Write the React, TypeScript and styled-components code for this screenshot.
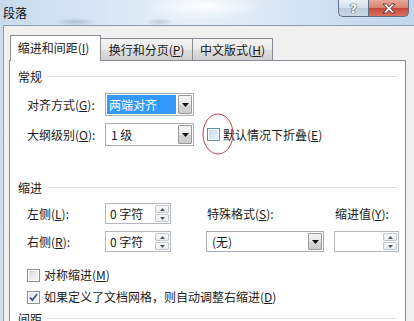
import React from 'react';
import styled, { createGlobalStyle, css } from 'styled-components';

const GlobalStyle = createGlobalStyle`
  html, body {
    margin: 0;
    padding: 0;
  }
  body {
    background: #fff;
    font-family: "Noto Sans CJK SC", "Noto Sans", sans-serif;
    font-size: 12px;
    color: #1a1a1a;
  }
  u {
    text-decoration-thickness: 1px;
    text-underline-offset: 1px;
  }
`;

type CheckState = 'normal' | 'hover' | 'checked';

function CheckBox({ state }: { state: CheckState }) {
  return (
    <Box $state={state}>
      {state === 'checked' && (
        <svg width="9" height="9" viewBox="0 0 9 9">
          <path d="M1 4.6 L3.4 7.2 L8 1.2" fill="none" stroke="#3f528a" strokeWidth="1.8" />
        </svg>
      )}
    </Box>
  );
}

function ComboBox({ value, width, selected }: { value: string; width: number; selected?: boolean }) {
  return (
    <Combo $width={width}>
      <ComboValue $selected={selected}>{value}</ComboValue>
      <DropButton>
        <svg width="7" height="4" viewBox="0 0 7 4">
          <path d="M0 0 H7 L3.5 4 Z" fill="#111" />
        </svg>
      </DropButton>
    </Combo>
  );
}

function SpinBox({ value, width }: { value: string; width: number }) {
  return (
    <Spin $width={width}>
      <SpinValue>{value}</SpinValue>
      <SpinButtons>
        <SpinHalf>
          <svg width="5" height="3" viewBox="0 0 5 3">
            <path d="M0 3 H5 L2.5 0 Z" fill="#555" />
          </svg>
        </SpinHalf>
        <SpinHalf>
          <svg width="5" height="3" viewBox="0 0 5 3">
            <path d="M0 0 H5 L2.5 3 Z" fill="#555" />
          </svg>
        </SpinHalf>
      </SpinButtons>
    </Spin>
  );
}

export default function App() {
  return (
    <>
      <GlobalStyle />
      <Window>
        <TitleBar>
          <Title>段落</Title>
          <CaptionButtons>
            <HelpButton>?</HelpButton>
            <CloseButton>
              <svg width="14" height="11" viewBox="0 0 14 11">
                <path
                  d="M1 1 H4.5 L7 3.8 L9.5 1 H13 L8.8 5.5 L13 10 H9.5 L7 7.2 L4.5 10 H1 L5.2 5.5 Z"
                  fill="#fff"
                  stroke="#5a2a24"
                  strokeWidth="0.9"
                  strokeLinejoin="round"
                />
              </svg>
            </CloseButton>
          </CaptionButtons>
        </TitleBar>

        <Frame>
          <Body>
            <TabStrip>
              <Tab $active $width={91}>
                缩进和间距(<u>I</u>)
              </Tab>
              <Tab $width={93}>
                换行和分页(<u>P</u>)
              </Tab>
              <Tab $width={81}>
                中文版式(<u>H</u>)
              </Tab>
            </TabStrip>

            <Panel>
              <SectionHeader>常规</SectionHeader>
              <GeneralRows>
                <FieldRow>
                  <FieldLabel>
                    对齐方式(<u>G</u>):
                  </FieldLabel>
                  <ComboBox value="两端对齐" width={89} selected />
                </FieldRow>
                <FieldRow>
                  <FieldLabel>
                    大纲级别(<u>O</u>):
                  </FieldLabel>
                  <ComboBox value="1 级" width={89} />
                  <CollapseOption>
                    <CheckBox state="hover" />
                    <span>
                      默认情况下折叠(<u>E</u>)
                    </span>
                    {/* red marker drawn on top of the screenshot */}
                    <Marker width="34" height="44" viewBox="0 0 34 44">
                      <ellipse cx="17" cy="22" rx="15" ry="20" fill="none" stroke="#c8404a" strokeWidth="1" />
                    </Marker>
                  </CollapseOption>
                </FieldRow>
              </GeneralRows>

              <SectionHeader $gap={34}>缩进</SectionHeader>
              <IndentGrid>
                <FieldLabel>
                  左侧(<u>L</u>):
                </FieldLabel>
                <SpinBox value="0 字符" width={66} />
                <GridLabel>
                  特殊格式(<u>S</u>):
                </GridLabel>
                <GridLabel>
                  缩进值(<u>Y</u>):
                </GridLabel>

                <FieldLabel>
                  右侧(<u>R</u>):
                </FieldLabel>
                <SpinBox value="0 字符" width={66} />
                <ComboBox value="(无)" width={118} />
                <SpinBox value="" width={65} />
              </IndentGrid>

              <OptionList>
                <OptionRow>
                  <CheckBox state="normal" />
                  <span>
                    对称缩进(<u>M</u>)
                  </span>
                </OptionRow>
                <OptionRow>
                  <CheckBox state="checked" />
                  <span>
                    如果定义了文档网格，则自动调整右缩进(<u>D</u>)
                  </span>
                </OptionRow>
              </OptionList>

              <SectionHeader $gap={6}>间距</SectionHeader>
            </Panel>
          </Body>
        </Frame>
      </Window>
    </>
  );
}

const Window = styled.div`
  width: 414px;
  height: 321px;
  overflow: hidden;
  display: flex;
  flex-direction: column;
  background: #cfdcea;
`;

const TitleBar = styled.div`
  height: 25px;
  flex: none;
  display: flex;
  justify-content: space-between;
  align-items: flex-start;
  padding: 0 5px 0 3px;
  background:
    radial-gradient(ellipse 60px 14px at 205px 6px, rgba(255, 255, 255, 0.9), rgba(255, 255, 255, 0)),
    radial-gradient(ellipse 22px 4px at 75px 22px, rgba(110, 130, 160, 0.35), rgba(110, 130, 160, 0)),
    radial-gradient(ellipse 14px 4px at 160px 22px, rgba(110, 130, 160, 0.3), rgba(110, 130, 160, 0)),
    linear-gradient(90deg, #c8dbee 0%, #d6e4f3 22%, #e7f0f9 45%, #dce8f5 65%, #c9dcef 85%, #c2d6ec 100%);
`;

const Title = styled.div`
  margin-top: 5px;
  line-height: 16px;
  font-size: 12px;
  color: #111;
`;

const CaptionButtons = styled.div`
  display: flex;
`;

const captionButton = css`
  height: 17px;
  box-sizing: border-box;
  display: flex;
  align-items: center;
  justify-content: center;
  border: 1px solid #5e6f86;
  border-top: none;
`;

const HelpButton = styled.div`
  ${captionButton};
  width: 30px;
  border-right: none;
  border-bottom-left-radius: 5px;
  background: linear-gradient(180deg, #e9eff6 0%, #d5e0ec 50%, #bccbdc 51%, #c9d6e5 100%);
  font-family: "DejaVu Sans", sans-serif;
  font-weight: bold;
  font-size: 13px;
  color: #fff;
  text-shadow: 0 0 1px #3b4a5e, 0 0 1px #3b4a5e, 0 0 1px #3b4a5e;
`;

const CloseButton = styled.div`
  ${captionButton};
  width: 41px;
  border-bottom-right-radius: 5px;
  background: linear-gradient(180deg, #e8a79b 0%, #d9806f 50%, #c7463a 51%, #d7705e 100%);
`;

const Frame = styled.div`
  flex: 1;
  display: flex;
  padding-left: 3px;
  background: linear-gradient(180deg, #cddbea 0%, #d7e1ec 100%);
`;

const Body = styled.div`
  flex: 1;
  background: #f0f0f0;
  border-top: 1px solid #8d9cae;
  border-left: 1px solid #8d9cae;
  padding: 9px 0 0 5px;
`;

const TabStrip = styled.div`
  height: 25px;
  display: flex;
  align-items: flex-end;
  padding-left: 1px;
`;

const Tab = styled.div<{ $active?: boolean; $width: number }>`
  width: ${(p) => p.$width}px;
  box-sizing: border-box;
  display: flex;
  align-items: center;
  justify-content: center;
  position: relative;
  line-height: 16px;
  border: 1px solid #898c95;
  border-bottom: none;
  margin-left: -1px;
  color: #1a1a1a;

  ${(p) =>
    p.$active
      ? css`
          height: 26px;
          margin-bottom: -1px;
          padding: 0 4px 2px 0;
          background: #fff;
          z-index: 2;
          &:first-child {
            margin-left: 0;
          }
        `
      : css`
          height: 22px;
          padding-top: 1px;
          background: linear-gradient(180deg, #f3f3f3 0%, #ebebeb 45%, #dddddd 55%, #cfcfcf 100%);
          z-index: 1;
        `}
`;

const Panel = styled.div`
  position: relative;
  z-index: 1;
  width: 397px;
  height: 400px;
  box-sizing: border-box;
  background: #fff;
  border: 1px solid #898c95;
  padding: 8px 8px 0 8px;
`;

const SectionHeader = styled.div<{ $gap?: number }>`
  display: flex;
  align-items: center;
  height: 16px;
  line-height: 16px;
  margin-top: ${(p) => p.$gap ?? 0}px;
  color: #1a1a1a;

  &::after {
    content: '';
    flex: 1;
    height: 1px;
    margin-left: 5px;
    margin-top: -1px;
    background: #dcdfe3;
  }
`;

const GeneralRows = styled.div`
  display: flex;
  flex-direction: column;
  gap: 7px;
  margin-top: 8px;
  padding-left: 9px;
`;

const FieldRow = styled.div`
  display: flex;
  align-items: center;
  height: 23px;
`;

const FieldLabel = styled.div`
  width: 78px;
  line-height: 16px;
  white-space: nowrap;
`;

const GridLabel = styled.div`
  line-height: 16px;
  white-space: nowrap;
  padding-left: 1px;
`;

const Combo = styled.div<{ $width: number }>`
  width: ${(p) => p.$width}px;
  height: 100%;
  box-sizing: border-box;
  display: flex;
  background: #fff;
  border: 1px solid #a9aeb5;
  padding: 1px;
`;

const ComboValue = styled.div<{ $selected?: boolean }>`
  flex: 1;
  display: flex;
  align-items: center;
  padding-left: 4px;
  line-height: 16px;
  white-space: nowrap;
  margin-right: 2px;

  ${(p) =>
    p.$selected &&
    css`
      background: #3399ff;
      color: #fff;
      padding-left: 2px;
    `}
`;

const DropButton = styled.div`
  width: 12px;
  display: flex;
  align-items: center;
  justify-content: center;
  border: 1px solid #9a9a9a;
  border-radius: 1px;
  background: linear-gradient(180deg, #f6f6f6 0%, #e6e6e6 50%, #d6d6d6 51%, #cbcbcb 100%);
`;

const Spin = styled.div<{ $width: number }>`
  width: ${(p) => p.$width}px;
  height: 21px;
  box-sizing: border-box;
  display: flex;
  background: #fff;
  border: 1px solid #b3b7bd;
  padding: 1px;
`;

const SpinValue = styled.div`
  flex: 1;
  display: flex;
  align-items: center;
  padding-left: 3px;
  line-height: 16px;
  white-space: nowrap;
`;

const SpinButtons = styled.div`
  width: 14px;
  display: flex;
  flex-direction: column;
  gap: 1px;
`;

const SpinHalf = styled.div`
  flex: 1;
  display: flex;
  align-items: center;
  justify-content: center;
  border: 1px solid #c3c8cf;
  border-radius: 1px;
  background: linear-gradient(180deg, #fbfbfb 0%, #e9ecf0 100%);
`;

const CollapseOption = styled.div`
  position: relative;
  display: flex;
  align-items: center;
  gap: 3px;
  margin-left: 13px;
  line-height: 16px;
`;

const Marker = styled.svg`
  position: absolute;
  left: -6px;
  top: -15px;
  pointer-events: none;
`;

const Box = styled.span<{ $state: CheckState }>`
  width: 13px;
  height: 13px;
  box-sizing: border-box;
  flex: none;
  display: flex;
  align-items: center;
  justify-content: center;
  border: 1px solid #8e8f8f;
  background: #fff;
  box-shadow: inset 0 0 0 1px #fff;

  ${(p) =>
    p.$state === 'normal' &&
    css`
      background: linear-gradient(135deg, #d1d3d6 0%, #eeeeee 60%, #f7f7f7 100%);
    `}

  ${(p) =>
    p.$state === 'hover' &&
    css`
      border-color: #5b8fb8;
      background: linear-gradient(135deg, #b9dcf3 0%, #d7ecf9 60%, #eaf6fd 100%);
    `}

  ${(p) =>
    p.$state === 'checked' &&
    css`
      background: linear-gradient(135deg, #dcdee1 0%, #f2f2f2 60%, #fafafa 100%);
    `}
`;

const IndentGrid = styled.div`
  display: grid;
  grid-template-columns: 78px 101px 128px 66px;
  grid-template-rows: 21px 21px;
  row-gap: 7px;
  align-items: center;
  margin-top: 7px;
  padding-left: 9px;
`;

const OptionList = styled.div`
  display: flex;
  flex-direction: column;
  gap: 6px;
  margin-top: 15px;
  padding-left: 9px;
`;

const OptionRow = styled.div`
  display: flex;
  align-items: center;
  gap: 4px;
  height: 16px;
  line-height: 16px;
`;
